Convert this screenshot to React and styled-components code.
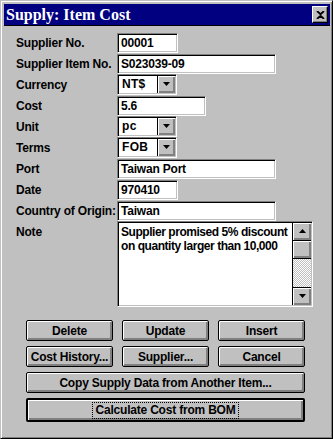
import styled, { createGlobalStyle } from 'styled-components'

const GlobalStyle = createGlobalStyle`
    body {
        margin: 0;
        background: #c0c0c0;
    }
`

const Window = styled.div`
    width: 333px;
    height: 439px;
    box-sizing: border-box;
    background: #c0c0c0;
    border: 1px solid;
    border-color: #c0c0c0 #000 #000 #c0c0c0;
    box-shadow: inset 1px 1px #fff, inset -1px -1px #808080;
    padding: 3px 2px 2px 3px;
    font-family: "Liberation Sans", Arial, sans-serif;
`

const TitleBar = styled.div`
    height: 21px;
    background: #000080;
    border-bottom: 1px solid #000;
    display: flex;
    align-items: center;
    justify-content: space-between;
    padding: 0 2px 0 2px;
`

const Title = styled.span`
    color: #fff;
    font-family: "Liberation Serif", "Times New Roman", serif;
    font-weight: bold;
    font-size: 16px;
`

const CloseBox = styled.div`
    width: 16px;
    height: 17px;
    box-sizing: border-box;
    background: #c0c0c0;
    border: 1px solid;
    border-color: #fff #000 #000 #fff;
    box-shadow: inset -1px -1px #808080;
    display: flex;
    align-items: center;
    justify-content: center;
`

const Form = styled.div`
    display: grid;
    grid-template-columns: 101px 1fr;
    grid-auto-rows: 21px;
    padding: 6px 0 0 12px;
    align-items: center;
`

const Label = styled.div`
    font-weight: bold;
    font-size: 12px;
    letter-spacing: -0.2px;
    color: #000;
    align-self: ${p => (p.$top ? 'start' : 'center')};
    padding-top: ${p => (p.$top ? '4px' : '0')};
`

const sunken = `
    box-sizing: border-box;
    border: 1px solid;
    border-color: #808080 #fff #fff #808080;
    box-shadow: inset 1px 1px #000, inset -1px -1px #c0c0c0;
    background: #fff;
`

const Field = styled.div`
    ${sunken}
    width: ${p => p.$w}px;
    height: 20px;
    padding: 2px 3px 0;
    font-weight: bold;
    font-size: 12px;
    letter-spacing: -0.2px;
    line-height: 15px;
    white-space: nowrap;
    overflow: hidden;
`

const Combo = styled.div`
    ${sunken}
    width: 60px;
    height: 21px;
    display: flex;
    padding: 1px;
`

const ComboText = styled.div`
    flex: 1;
    padding: 1px 3px 0;
    font-weight: bold;
    font-size: 12px;
    line-height: 15px;
    letter-spacing: 0.3px;
`

const raised = `
    box-sizing: border-box;
    background: #c0c0c0;
    border-left: 1px solid #000;
    box-shadow: inset 1px 1px #fff, inset -1px -1px #808080, inset -2px -2px #808080;
    display: flex;
    align-items: center;
    justify-content: center;
`

const ArrowButton = styled.div`
    ${raised}
    width: 18px;
`

const NoteBox = styled.div`
    ${sunken}
    width: 196px;
    height: 86px;
    align-self: start;
    display: flex;
    padding: 2px 1px 1px 2px;
    grid-row: span 4;
`

const NoteText = styled.div`
    flex: 1;
    font-weight: bold;
    font-size: 12px;
    letter-spacing: -0.45px;
    line-height: 14px;
    padding: 1px 0 0 1px;
    white-space: nowrap;
    overflow: hidden;
`

const ScrollBar = styled.div`
    width: 18px;
    display: flex;
    flex-direction: column;
    border-left: 1px solid #000;
    margin: -1px 0 0 0;
`

const ScrollButton = styled.div`
    ${raised}
    border-left: none;
    height: 18px;
    border-bottom: ${p => (p.$sep ? '1px solid #000' : 'none')};
    border-top: ${p => (p.$sepTop ? '1px solid #000' : 'none')};
`

const Track = styled.div`
    flex: 1;
    background: repeating-conic-gradient(#c0c0c0 0 25%, #fff 0 50%) 0 0 / 2px 2px;
`

const Buttons = styled.div`
    display: grid;
    grid-template-columns: repeat(3, 87px);
    column-gap: 9px;
    row-gap: 5px;
    padding: 15px 0 0 22px;
`

const Button = styled.div`
    grid-column: ${p => (p.$wide ? '1 / -1' : 'auto')};
    height: ${p => (p.$default ? 24 : 21)}px;
    box-sizing: border-box;
    background: #c0c0c0;
    border: ${p => (p.$default ? 2 : 1)}px solid #000;
    border-radius: 2px;
    box-shadow: inset 1px 1px #fff, inset -1px -1px #808080, inset -2px -2px #808080;
    display: flex;
    align-items: center;
    justify-content: center;
    font-weight: bold;
    font-size: 12px;
    letter-spacing: -0.2px;
    color: #000;
`

const Focus = styled.span`
    border: 1px dotted #000;
    padding: 1px 2px;
    line-height: 13px;
`

const DownArrow = () => (
    <svg width="7" height="5" viewBox="0 0 7 5">
        <path d="M0 0h7L3.5 4z" fill="#000" />
    </svg>
)

const UpArrow = () => (
    <svg width="7" height="5" viewBox="0 0 7 5">
        <path d="M0 4h7L3.5 0z" fill="#000" />
    </svg>
)

const ComboBox = ({ value }) => (
    <Combo>
        <ComboText>{value}</ComboText>
        <ArrowButton><DownArrow /></ArrowButton>
    </Combo>
)

const App = () => {
    return (
        <>
            <GlobalStyle />
            <Window>
                <TitleBar>
                    <Title>Supply: Item Cost</Title>
                    <CloseBox>
                        <svg width="9" height="8" viewBox="0 0 9 8">
                            <path d="M1 0l3.5 3.2L8 0M1 8l3.5-3.2L8 8" stroke="#000" strokeWidth="1.8" fill="none" />
                        </svg>
                    </CloseBox>
                </TitleBar>
                <Form>
                    <Label>Supplier No.</Label>
                    <Field $w={61}>00001</Field>
                    <Label>Supplier Item No.</Label>
                    <Field $w={159}>S023039-09</Field>
                    <Label>Currency</Label>
                    <ComboBox value="NT$" />
                    <Label>Cost</Label>
                    <Field $w={89}>5.6</Field>
                    <Label>Unit</Label>
                    <ComboBox value="pc" />
                    <Label>Terms</Label>
                    <ComboBox value="FOB" />
                    <Label>Port</Label>
                    <Field $w={159}>Taiwan Port</Field>
                    <Label>Date</Label>
                    <Field $w={61}>970410</Field>
                    <Label>Country of Origin:</Label>
                    <Field $w={159}>Taiwan</Field>
                    <Label $top>Note</Label>
                    <NoteBox>
                        <NoteText>
                            Supplier promised 5% discount<br />
                            on quantity larger than 10,000
                        </NoteText>
                        <ScrollBar>
                            <ScrollButton $sep><UpArrow /></ScrollButton>
                            <ScrollButton $sep />
                            <Track />
                            <ScrollButton $sepTop><DownArrow /></ScrollButton>
                        </ScrollBar>
                    </NoteBox>
                </Form>
                <Buttons>
                    <Button>Delete</Button>
                    <Button>Update</Button>
                    <Button>Insert</Button>
                    <Button>Cost History...</Button>
                    <Button>Supplier...</Button>
                    <Button>Cancel</Button>
                    <Button $wide>Copy Supply Data from Another Item...</Button>
                    <Button $wide $default><Focus>Calculate Cost from BOM</Focus></Button>
                </Buttons>
            </Window>
        </>
    )
}

export default App
